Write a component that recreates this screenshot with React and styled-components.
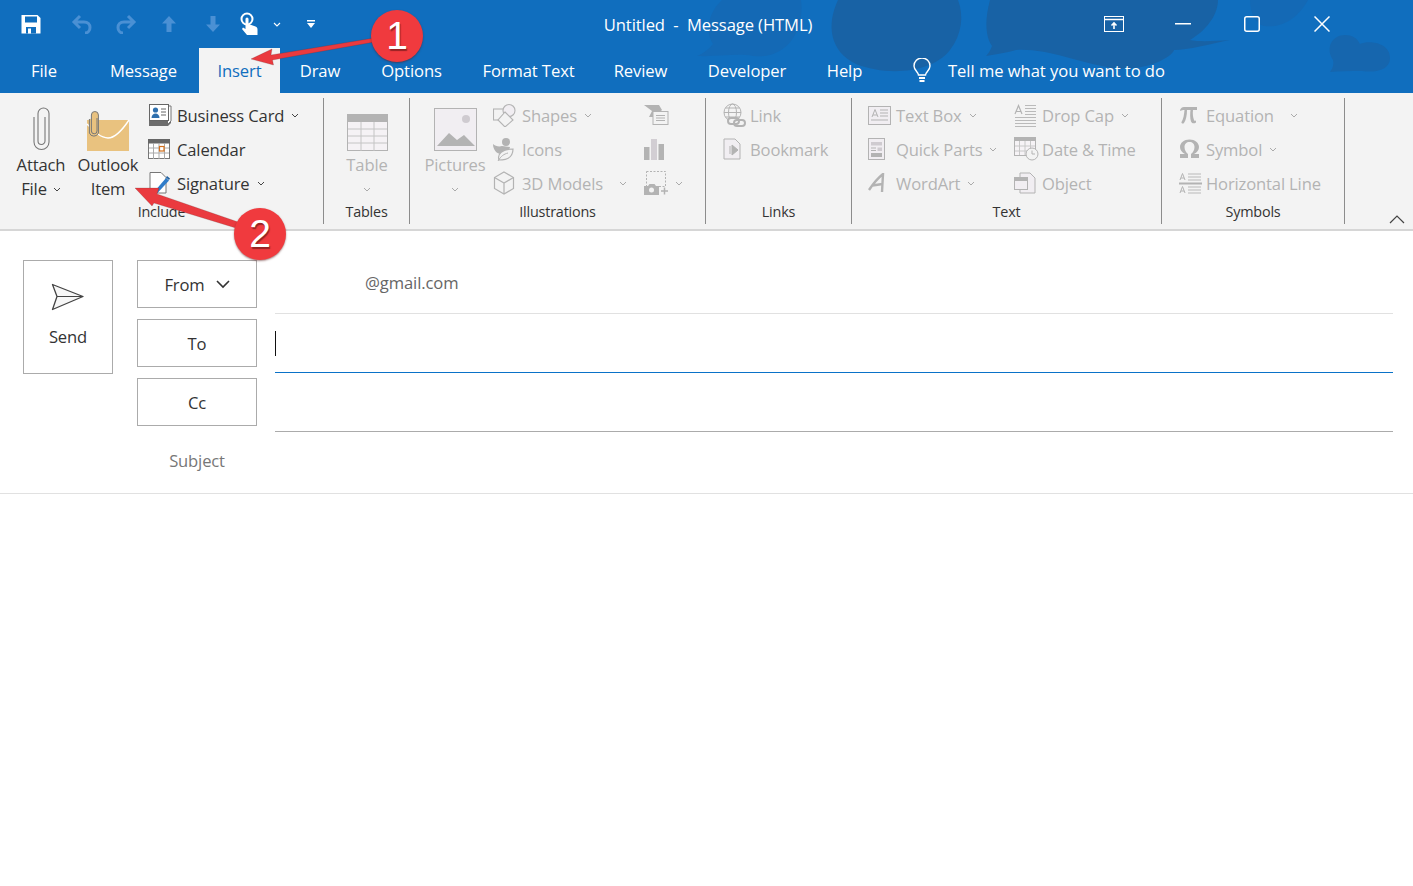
import styled, { createGlobalStyle } from 'styled-components'

const GlobalStyle = createGlobalStyle`
  html, body { margin: 0; padding: 0; background: #fff; }
  body { font-family: "Open Sans", "Liberation Sans", sans-serif; overflow: hidden; }
`

const Window = styled.div`
  position: relative;
  width: 1413px;
  height: 886px;
  background: #fff;
  overflow: hidden;
`

/* ---------- header ---------- */

const Header = styled.header`
  position: relative;
  height: 93px;
  background: #106ebe;
  color: #fff;
`

const Pattern = styled.svg`
  position: absolute;
  left: 0;
  top: 0;
`

const TitleBar = styled.div`
  position: relative;
  height: 48px;
  display: flex;
  align-items: center;
`

const QuickBar = styled.div`
  display: flex;
  align-items: center;
  width: 330px;
  height: 42px;
  flex: none;
`

const QuickSlot = styled.div`
  width: ${p => p.$w}px;
  display: flex;
  justify-content: center;
  flex: none;
`

const Title = styled.div`
  width: 756px;
  flex: none;
  text-align: center;
  font-size: 16.6px;
  letter-spacing: -0.1px;
  white-space: pre;
`

const WindowControls = styled.div`
  display: flex;
  align-items: center;
  height: 42px;
  margin-left: 50px;
`

const ControlSlot = styled.div`
  width: 69.3px;
  display: flex;
  justify-content: center;
`

const TabRow = styled.nav`
  position: relative;
  height: 45px;
  display: flex;
`

const Tab = styled.div`
  width: ${p => p.$w}px;
  flex: none;
  display: flex;
  align-items: center;
  justify-content: center;
  font-size: 16.6px;
  letter-spacing: -0.1px;
  padding-bottom: 1px;
  background: ${p => (p.$active ? '#f3f3f3' : 'transparent')};
  color: ${p => (p.$active ? '#106ebe' : '#fff')};
`

const TellMe = styled.div`
  display: flex;
  align-items: center;
  gap: 17px;
  margin-left: 31px;
  font-size: 16.6px;
  letter-spacing: -0.05px;
`

/* ---------- ribbon ---------- */

const Ribbon = styled.section`
  position: relative;
  height: 138px;
  box-sizing: border-box;
  background: #f3f3f3;
  border-bottom: 2px solid #d6d6d6;
  padding-top: 5px;
  display: flex;
  align-items: flex-start;
`

const Group = styled.div`
  width: ${p => p.$w}px;
  height: 126px;
  box-sizing: border-box;
  flex: none;
  border-right: 1px solid #8c8c8c;
  display: flex;
  flex-direction: column;
`

const GroupBody = styled.div`
  flex: 1;
  display: flex;
  padding-left: ${p => p.$pad || 0}px;
`

const GroupLabel = styled.div`
  height: 22px;
  line-height: 20px;
  text-align: center;
  font-size: 14.4px;
  letter-spacing: -0.2px;
  color: #333;
  padding-left: ${p => p.$shift || 0}px;
`

const LargeButton = styled.div`
  width: ${p => p.$w}px;
  flex: none;
  display: flex;
  flex-direction: column;
  align-items: center;
  font-size: 16.6px;
  letter-spacing: -0.15px;
  color: ${p => (p.$off ? '#b3b3b3' : '#333')};
`

const LargeIcon = styled.div`
  height: 53px;
  display: flex;
  align-items: flex-end;
  margin-bottom: 2px;
`

const LargeLine = styled.div`
  height: 24px;
  line-height: 24px;
  display: flex;
  align-items: center;
  gap: 6px;
  white-space: nowrap;
`

const Stack = styled.div`
  width: ${p => (p.$w ? `${p.$w}px` : 'auto')};
  flex: none;
  display: flex;
  flex-direction: column;
`

const SmallButton = styled.div`
  height: 34px;
  display: flex;
  align-items: center;
  font-size: 16.6px;
  letter-spacing: -0.15px;
  white-space: nowrap;
  color: ${p => (p.$off ? '#b3b3b3' : '#333')};
`

const SmallIcon = styled.div`
  width: ${p => p.$w || 28}px;
  height: 24px;
  flex: none;
  display: flex;
  align-items: center;
`

const Caret = styled.svg`
  flex: none;
  margin-left: ${p => p.$gap ?? 7}px;
`

const Collapse = styled.svg`
  position: absolute;
  right: 8px;
  bottom: 5px;
`

/* ---------- compose form ---------- */

const Compose = styled.main`
  display: grid;
  grid-template-columns: 90px 120px 1fr;
  column-gap: 0;
  padding: 29px 20px 0 23px;
`

const SendButton = styled.div`
  height: 114px;
  box-sizing: border-box;
  border: 1px solid #ababab;
  display: flex;
  flex-direction: column;
  align-items: center;
  font-size: 16.6px;
  letter-spacing: -0.15px;
  color: #333;
  padding-top: 22px;
  gap: 14px;
`

const Labels = styled.div`
  margin-left: 24px;
  width: 120px;
  display: flex;
  flex-direction: column;
  gap: 11px;
`

const FieldButton = styled.div`
  height: 48px;
  box-sizing: border-box;
  border: 1px solid #ababab;
  display: flex;
  align-items: center;
  justify-content: center;
  gap: 11px;
  font-size: 16.6px;
  letter-spacing: -0.15px;
  color: #333;
`

const SubjectLabel = styled.div`
  height: 48px;
  display: flex;
  align-items: center;
  justify-content: center;
  font-size: 16.6px;
  letter-spacing: -0.15px;
  color: #777;
  margin-top: -1px;
`

const Fields = styled.div`
  margin-left: 42px;
  display: flex;
  flex-direction: column;
`

const FieldLine = styled.div`
  height: 59px;
  box-sizing: border-box;
  display: flex;
  align-items: center;
  border-bottom: 1px solid ${p => p.$line};
  margin-top: ${p => p.$top || 0}px;
`

const Address = styled.span`
  margin-left: 90px;
  font-size: 16.6px;
  letter-spacing: -0.1px;
  color: #666;
  padding-bottom: 3px;
`

const TextCaret = styled.span`
  width: 1px;
  height: 25px;
  background: #111;
`

const SubjectRule = styled.div`
  position: absolute;
  left: 0;
  right: 0;
  top: 493px;
  height: 1px;
  background: #e1e1e1;
`

/* ---------- annotations ---------- */

const Notes = styled.svg`
  position: absolute;
  left: 0;
  top: 0;
  pointer-events: none;
`

const Badge = styled.div`
  position: absolute;
  left: ${p => p.$x - 26}px;
  top: ${p => p.$y - 26}px;
  width: 52px;
  height: 52px;
  border-radius: 50%;
  background: #f03a3e;
  box-shadow: 0 1px 2px rgba(90, 30, 30, 0.55);
  color: #fff;
  display: flex;
  align-items: center;
  justify-content: center;
  font-family: "Liberation Sans", sans-serif;
  font-size: 39px;
  text-shadow: 1px 2px 1px rgba(90, 20, 20, 0.6);
`

/* ---------- icons ---------- */

const OFF = '#b3b3b3'
const OFF_LIGHT = '#f1eef2'

const Chev = ({ gap, off }) => (
  <Caret $gap={gap} width="8" height="5" viewBox="0 0 8 5">
    <path d="M1 1l3 3 3-3" fill="none" stroke={off ? '#aaa' : '#444'} strokeWidth="1" />
  </Caret>
)

const SaveIcon = () => (
  <svg width="20" height="20" viewBox="0 0 20 20">
    <path d="M0.5 1h16l3 3v15.5H.5z" fill="#fff" />
    <rect x="4" y="2.5" width="12" height="6" fill="#106ebe" />
    <rect x="5" y="13" width="10" height="6.5" fill="#106ebe" />
    <rect x="7" y="14.5" width="3" height="5" fill="#fff" />
  </svg>
)

const UndoIcon = ({ flip }) => (
  <svg width="22" height="20" viewBox="0 0 22 20" style={flip ? { transform: 'scaleX(-1)' } : undefined}>
    <path d="M9 2L3 8l6 6M3 8h10c4 0 6 2.500 6 5.500S17 19 14 19" fill="none" stroke="#4a90d4" strokeWidth="3" />
  </svg>
)

const MoveIcon = ({ down }) => (
  <svg width="16" height="18" viewBox="0 0 16 18" style={down ? { transform: 'scaleY(-1)' } : undefined}>
    <path d="M8 1L1 8.500h4.500V17h5V8.500H15z" fill="#4a90d4" />
  </svg>
)

const TouchIcon = () => (
  <svg width="20" height="24" viewBox="0 0 20 24">
    <circle cx="7" cy="7" r="5.500" fill="none" stroke="#fff" strokeWidth="2" />
    <path d="M5.500 7a1.500 1.500 0 013 0v5l7 2.500c1.500.5 2 1.500 2 3V23H7l-5-6 1-1.500 2.500 1.500z" fill="#fff" />
  </svg>
)

const MiniChevron = () => (
  <svg width="8" height="5" viewBox="0 0 8 5">
    <path d="M1 1l3 3 3-3" fill="none" stroke="#fff" strokeWidth="1.100" />
  </svg>
)

const CustomizeIcon = () => (
  <svg width="8" height="8" viewBox="0 0 8 8">
    <rect width="8" height="1.500" fill="#fff" />
    <path d="M0 3h8L4 8z" fill="#fff" />
  </svg>
)

const RibbonDisplayIcon = () => (
  <svg width="20" height="16" viewBox="0 0 20 16" fill="none" stroke="#fff">
    <rect x=".5" y=".5" width="19" height="15" />
    <path d="M1 3.500h18" strokeWidth="1.500" />
    <path d="M10 13V7M7.500 9.500L10 7l2.500 2.500" strokeWidth="1.600" />
  </svg>
)

const MinimizeIcon = () => (
  <svg width="16" height="2" viewBox="0 0 16 2">
    <rect width="16" height="1.500" fill="#fff" />
  </svg>
)

const MaximizeIcon = () => (
  <svg width="16" height="16" viewBox="0 0 16 16">
    <rect x=".75" y=".75" width="14.500" height="14.500" rx="2" fill="none" stroke="#fff" strokeWidth="1.500" />
  </svg>
)

const CloseIcon = () => (
  <svg width="16" height="16" viewBox="0 0 16 16">
    <path d="M.5.5l15 15M15.500.5l-15 15" stroke="#fff" strokeWidth="1.500" />
  </svg>
)

const BulbIcon = () => (
  <svg width="18" height="25" viewBox="0 0 18 25" fill="none" stroke="#fff" strokeWidth="1.400">
    <path d="M5.500 17c0-3-4.500-4.500-4.500-9a8 8 0 0116 0c0 4.500-4.500 6-4.500 9z" />
    <path d="M6 20h6M6.500 23h5" strokeWidth="1.800" />
  </svg>
)

const PaperclipIcon = () => (
  <svg width="17" height="44" viewBox="0 0 17 44" fill="none" stroke="#777" strokeWidth="1.100">
    <path d="M12 10v24a3.500 3.500 0 01-7 0V6.500a5.500 5.500 0 0111 0V35a7.500 7.500 0 01-15 0V10" />
  </svg>
)

const OutlookItemIcon = () => (
  <svg width="44" height="40" viewBox="0 0 44 40">
    <rect x="1" y="9" width="42" height="31" fill="#e9c27f" />
    <path d="M1 13c6 6 13 14 21 14 8 0 15-9 21-18" fill="none" stroke="#fff" strokeWidth="1.400" />
    <path d="M11 7v13a2.800 2.800 0 01-5.600 0V4a3.500 3.500 0 017 0v18a4.800 4.800 0 01-9 0V8" fill="#e9c27f" stroke="#777" strokeWidth="1" />
  </svg>
)

const BusinessCardIcon = () => (
  <svg width="24" height="23" viewBox="0 0 24 23">
    <path d="M1 16h22v3l-3 3H1z" fill="#6d6d6d" />
    <path d="M20 2h3v15l-3 3" fill="#fff" stroke="#777" />
    <rect x="1.500" y=".5" width="19" height="16" fill="#fff" stroke="#666" />
    <circle cx="7.500" cy="6" r="2.600" fill="#2f70ae" />
    <path d="M3.500 14c0-3 2-4.500 4-4.500s4 1.500 4 4.500z" fill="#2f70ae" />
    <path d="M13 5h5M13 8h5M13 11h5" stroke="#666" />
  </svg>
)

const CalendarIcon = () => (
  <svg width="22" height="20" viewBox="0 0 22 20">
    <rect x=".5" y=".5" width="21" height="19" fill="#fff" stroke="#777" />
    <rect x="0" y="0" width="22" height="4.500" fill="#666" />
    <path d="M5.500 4v16M11 4v16M16.500 4v16M1 9h20M1 14h20" stroke="#aaa" />
    <rect x="11.500" y="7.500" width="4.500" height="4.500" fill="#fff" stroke="#d4701c" strokeWidth="1.200" />
  </svg>
)

const SignatureIcon = () => (
  <svg width="24" height="24" viewBox="0 0 24 24">
    <path d="M2 1.500h11l5 5V22H2z" fill="#fff" stroke="#777" />
    <path d="M6 21L18 7l3 2.500L9.500 22 5 23z" fill="#2f7cc9" />
    <path d="M19 5l3 2.500-1 1.500-3-2.500z" fill="#1f5f9f" />
  </svg>
)

const TableIcon = () => (
  <svg width="41" height="37" viewBox="0 0 41 37">
    <rect x=".5" y=".5" width="40" height="36" fill="#f5f2f5" stroke={OFF} />
    <rect x="0" y="0" width="41" height="8" fill={OFF} />
    <path d="M14 8v29M27 8v29M1 15h39M1 22h39M1 29h39" stroke="#c4c4c4" fill="none" />
  </svg>
)

const PictureIcon = () => (
  <svg width="43" height="43" viewBox="0 0 43 43">
    <rect x=".5" y=".5" width="42" height="42" fill={OFF_LIGHT} stroke={OFF} />
    <circle cx="32" cy="11" r="4" fill="#cfcbd0" />
    <path d="M3 38l12-13 8 7 7-5 11 11v0H3z" fill={OFF} />
  </svg>
)

const ShapesIcon = () => (
  <svg width="24" height="24" viewBox="0 0 24 24" fill="none" stroke={OFF} strokeWidth="1.100">
    <rect x=".5" y="6" width="12" height="11" />
    <circle cx="16" cy="7.500" r="6" fill={OFF_LIGHT} />
    <path d="M12 9l8 8-8 7-7-7z" fill="#f3f3f3" />
  </svg>
)

const DuckIcon = () => (
  <svg width="23" height="24" viewBox="0 0 23 24">
    <circle cx="13" cy="5" r="4" fill={OFF} />
    <path d="M0 7c2 2 6 3 9 2l8 1c-1 5-4 7-9 7-4 0-8-4-8-10z" fill={OFF} />
    <path d="M6 23c-2-6 3-11 14-11 0 7-4 11-14 11z" fill="#f3f3f3" stroke={OFF} strokeWidth="1.200" />
    <path d="M5 24c3-5 6-7 10-8" stroke={OFF} fill="none" />
  </svg>
)

const CubeIcon = () => (
  <svg width="22" height="24" viewBox="0 0 22 24" fill="none" stroke={OFF} strokeWidth="1.200">
    <path d="M11 1l9.500 5.500v11L11 23l-9.500-5.500v-11z" />
    <path d="M1.500 6.500L11 12l9.500-5.500M11 12v11" />
  </svg>
)

const SmartArtIcon = () => (
  <svg width="25" height="22" viewBox="0 0 25 22">
    <path d="M0 1h15l3 5-4 4 2 3H5l3-6z" fill={OFF} />
    <rect x="9" y="7.500" width="15" height="13" fill="#f3f3f3" stroke={OFF} />
    <path d="M12 11.500h9M12 14h9M12 16.500h9" stroke={OFF} />
  </svg>
)

const ChartIcon = () => (
  <svg width="20" height="21" viewBox="0 0 20 21">
    <rect x="0" y="8" width="5.500" height="13" fill={OFF} />
    <rect x="7" y="0" width="6" height="21" fill="#d2ced3" />
    <rect x="14.500" y="5" width="5.500" height="16" fill={OFF} />
  </svg>
)

const ScreenshotIcon = () => (
  <svg width="25" height="24" viewBox="0 0 25 24">
    <rect x="2.500" y=".5" width="19" height="15" fill="none" stroke={OFF} strokeDasharray="2 1.500" />
    <path d="M0 15h4l1.500-2h5L12 15h3v9H0z" fill={OFF} />
    <circle cx="7.500" cy="19" r="2.500" fill="#f3f3f3" />
    <path d="M17 20h7M20.500 16.500v7" stroke={OFF} strokeWidth="1.500" />
  </svg>
)

const LinkIcon = () => (
  <svg width="23" height="24" viewBox="0 0 23 24" fill="none" stroke={OFF}>
    <circle cx="9.500" cy="9.500" r="8.500" />
    <ellipse cx="9.500" cy="9.500" rx="4" ry="8.500" />
    <path d="M1 9.500h17M2.500 5h14M2.500 14h14" />
    <rect x="5" y="15" width="11" height="6" rx="3" strokeWidth="2" fill="#f3f3f3" />
    <rect x="11" y="17" width="11" height="6" rx="3" strokeWidth="2" />
  </svg>
)

const BookmarkIcon = () => (
  <svg width="19" height="22" viewBox="0 0 19 22" fill={OFF_LIGHT} stroke={OFF}>
    <path d="M1 1h11l5 5v15H1z" />
    <path d="M7 8v8M9 7l6 5-6 5z" fill={OFF} />
  </svg>
)

const TextBoxIcon = () => (
  <svg width="23" height="19" viewBox="0 0 23 19" fill="none" stroke={OFF}>
    <rect x=".5" y=".5" width="22" height="18" fill={OFF_LIGHT} />
    <path d="M4 11l3-7.500 3 7.500M5 9h4" />
    <path d="M12 4h8M12 7h8M12 10h8M3 14h17" />
  </svg>
)

const QuickPartsIcon = () => (
  <svg width="17" height="22" viewBox="0 0 17 22">
    <rect x=".5" y=".5" width="16" height="21" fill={OFF_LIGHT} stroke={OFF} />
    <rect x="3" y="4" width="11" height="3.500" fill="#cfcbd0" />
    <path d="M3 10h5M3 12.500h5" stroke={OFF} />
    <rect x="9.500" y="9.500" width="4.500" height="3.500" fill="#cfcbd0" />
    <rect x="3" y="15" width="11" height="4" fill={OFF} />
  </svg>
)

const WordArtIcon = () => (
  <svg width="17" height="20" viewBox="0 0 17 20">
    <path d="M1 17C5 11 10 5 15 1l-1 18M4.500 12.500L14.500 11" fill="none" stroke={OFF} strokeWidth="2.400" />
  </svg>
)

const DropCapIcon = () => (
  <svg width="23" height="23" viewBox="0 0 23 23" fill="none" stroke={OFF}>
    <path d="M1 10l3.500-8.500L8 10M2 7.500h5" strokeWidth="1.200" />
    <path d="M11 1.500h11M11 4.500h11M11 7.500h11M11 10.500h11M1 13.500h21M1 16.500h21M1 19.500h21M1 22.500h21" strokeWidth=".9" />
  </svg>
)

const DateTimeIcon = () => (
  <svg width="25" height="24" viewBox="0 0 25 24" fill="none">
    <rect x=".5" y=".5" width="21" height="18" stroke={OFF} fill="#f6f3f6" />
    <rect width="22" height="4" fill={OFF} />
    <path d="M5.500 4v14M11 4v14M16.500 4v14M1 9h20M1 14h20" stroke="#c8c8c8" />
    <circle cx="18" cy="17" r="6" fill="#f3f3f3" stroke={OFF} />
    <path d="M18 13.500V17h3" stroke={OFF} />
  </svg>
)

const ObjectIcon = () => (
  <svg width="22" height="22" viewBox="0 0 22 22" fill={OFF_LIGHT} stroke={OFF}>
    <path d="M6 5V1h10l5 5v15H6v-3" />
    <rect x=".5" y="5.500" width="13" height="12" />
    <rect x="1" y="6" width="12" height="3" fill={OFF} stroke="none" />
  </svg>
)

const PiIcon = () => (
  <svg width="19" height="20" viewBox="0 0 19 20">
    <path d="M1 5c1-2 2-3 4-3h13v3h-4c-.5 4 0 7 1 10 .3 1 1 1 2 .5v2c-2 1.500-4 1-5-1-1-3-1-8-.5-11.500H8c0 5-1 10-3 13-1 1-3 .5-2.500-1 2-3 2.500-7 3-12C3.500 5 2.500 5 1.500 6z" fill={OFF} />
  </svg>
)

const OmegaIcon = () => (
  <svg width="21" height="20" viewBox="0 0 21 20">
    <path d="M1 19v-4h5C3 13.500 1 11 1 8c0-4 4-7.500 9.500-7.500S20 4 20 8c0 3-2 5.500-5 7h5v4h-8v-4c2-1.500 3.500-4 3.500-7 0-3-2-5-5-5s-5 2-5 5c0 3 1.500 5.500 3.500 7v4z" fill={OFF} />
  </svg>
)

const HorizontalLineIcon = () => (
  <svg width="23" height="22" viewBox="0 0 23 22" fill="none" stroke={OFF}>
    <path d="M1 8l2.500-6.500L6 8M2 6h3M1 21l2.500-6.500L6 21M2 19h3" />
    <path d="M9 2h13M9 5h13M9 8h13M9 15h13M9 18h13M9 21h13" strokeWidth=".9" />
    <path d="M0 11.500h23" strokeWidth="2" />
  </svg>
)

const SendIcon = () => (
  <svg width="34" height="28" viewBox="0 0 34 28">
    <path d="M1.500 1.500L32 13.500 1.500 26.500 6 13.500z" fill="#f7f7f7" stroke="#444" strokeWidth="1.300" strokeLinejoin="round" />
    <path d="M6 13.500h26" stroke="#444" strokeWidth="1" />
  </svg>
)

const FromChevron = () => (
  <svg width="14" height="9" viewBox="0 0 14 9">
    <path d="M1 1l6 6 6-6" fill="none" stroke="#333" strokeWidth="1.600" />
  </svg>
)

const tabs = [
  ['File', 88],
  ['Message', 111],
  ['Insert', 81],
  ['Draw', 80],
  ['Options', 103],
  ['Format Text', 131],
  ['Review', 93],
  ['Developer', 120],
  ['Help', 75],
]

const Small = ({ icon, slot, label, off, caret, gap }) => (
  <SmallButton $off={off}>
    <SmallIcon $w={slot}>{icon}</SmallIcon>
    {label}
    {caret && <Chev off={off} gap={gap} />}
  </SmallButton>
)

const App = () => {
  return (
    <Window>
      <GlobalStyle />
      <Header>
        <Pattern width="1413" height="93" viewBox="0 0 1413 93">
          <path d="M722 0C706 15 706 34 713 44c-5 6-11 10-16 12 20 1 40-3 56 0 34 4 52-26 48-56z" fill="#1469b5" />
          <path d="M838 0c-12 25-8 52 18 64 30 12 75 10 94-14 12-16 14-34 8-50z" fill="#1862a5" />
          <path d="M990 0c-6 22-4 38 2 46-2 5-4 8-6 10 12-2 24-4 30-6 30-2 60 12 96 18 40 4 62-14 62-18 14 0 36-6 56-10-16 1-30 2-40 0 20-12 28-28 28-40z" fill="#1862a5" />
          <path d="M1250 0c0 14 6 24 14 26 14 2 32-4 44-26z" fill="#1469b5" />
          <path d="M1330 72c3-4 4-8 3-12-8-12-1-25 12-25 7 0 12 3 15 9 8-4 30-2 30 14 0 12-14 15-28 13-12 0-22 0-32 1z" fill="#1666ae" />
        </Pattern>
        <TitleBar>
          <QuickBar>
            <QuickSlot $w={62}><SaveIcon /></QuickSlot>
            <QuickSlot $w={44} style={{ marginLeft: -2 }}><UndoIcon /></QuickSlot>
            <QuickSlot $w={43}><UndoIcon flip /></QuickSlot>
            <QuickSlot $w={44}><MoveIcon /></QuickSlot>
            <QuickSlot $w={43}><MoveIcon down /></QuickSlot>
            <QuickSlot $w={32}><TouchIcon /></QuickSlot>
            <QuickSlot $w={21}><MiniChevron /></QuickSlot>
            <QuickSlot $w={47}><CustomizeIcon /></QuickSlot>
          </QuickBar>
          <Title style={{ marginLeft: -330 + 330 - 330 + 330, width: 756 }}>{'Untitled  -  Message (HTML)'}</Title>
          <WindowControls>
            <ControlSlot style={{ marginLeft: -57 }}><RibbonDisplayIcon /></ControlSlot>
            <ControlSlot><MinimizeIcon /></ControlSlot>
            <ControlSlot><MaximizeIcon /></ControlSlot>
            <ControlSlot><CloseIcon /></ControlSlot>
          </WindowControls>
        </TitleBar>
        <TabRow>
          {tabs.map(([name, w]) => (
            <Tab key={name} $w={w} $active={name === 'Insert'}>{name}</Tab>
          ))}
          <TellMe>
            <BulbIcon />
            Tell me what you want to do
          </TellMe>
        </TabRow>
      </Header>

      <Ribbon>
        <Group $w={324}>
          <GroupBody $pad={8}>
            <LargeButton $w={66}>
              <LargeIcon><PaperclipIcon /></LargeIcon>
              <LargeLine>Attach</LargeLine>
              <LargeLine>File<Chev gap={0} /></LargeLine>
            </LargeButton>
            <LargeButton $w={68}>
              <LargeIcon><OutlookItemIcon /></LargeIcon>
              <LargeLine>Outlook</LargeLine>
              <LargeLine>Item</LargeLine>
            </LargeButton>
            <Stack style={{ marginLeft: 6 }}>
              <Small icon={<BusinessCardIcon />} slot={29} label="Business Card" caret />
              <Small icon={<CalendarIcon />} slot={29} label="Calendar" />
              <Small icon={<SignatureIcon />} slot={29} label="Signature" caret />
            </Stack>
          </GroupBody>
          <GroupLabel $shift={0}>Include</GroupLabel>
        </Group>

        <Group $w={86}>
          <GroupBody>
            <LargeButton $w={86} $off>
              <LargeIcon><TableIcon /></LargeIcon>
              <LargeLine>Table</LargeLine>
              <LargeLine><Chev gap={0} off /></LargeLine>
            </LargeButton>
          </GroupBody>
          <GroupLabel>Tables</GroupLabel>
        </Group>

        <Group $w={296}>
          <GroupBody $pad={14}>
            <LargeButton $w={62} $off>
              <LargeIcon><PictureIcon /></LargeIcon>
              <LargeLine>Pictures</LargeLine>
              <LargeLine><Chev gap={0} off /></LargeLine>
            </LargeButton>
            <Stack $w={151} style={{ marginLeft: 7 }}>
              <Small off icon={<ShapesIcon />} slot={29} label="Shapes" caret />
              <Small off icon={<DuckIcon />} slot={29} label="Icons" />
              <Small off icon={<CubeIcon />} slot={29} label="3D Models" caret gap={16} />
            </Stack>
            <Stack>
              <Small off icon={<SmartArtIcon />} slot={32} />
              <Small off icon={<ChartIcon />} slot={32} />
              <SmallButton $off>
                <SmallIcon $w={31}><ScreenshotIcon /></SmallIcon>
                <Chev off gap={0} />
              </SmallButton>
            </Stack>
          </GroupBody>
          <GroupLabel $shift={0}>Illustrations</GroupLabel>
        </Group>

        <Group $w={146}>
          <GroupBody $pad={17}>
            <Stack>
              <Small off icon={<LinkIcon />} slot={27} label="Link" />
              <Small off icon={<BookmarkIcon />} slot={27} label="Bookmark" />
            </Stack>
          </GroupBody>
          <GroupLabel>Links</GroupLabel>
        </Group>

        <Group $w={310}>
          <GroupBody $pad={16}>
            <Stack $w={146}>
              <Small off icon={<TextBoxIcon />} label="Text Box" caret />
              <Small off icon={<QuickPartsIcon />} label="Quick Parts" caret />
              <Small off icon={<WordArtIcon />} label="WordArt" caret />
            </Stack>
            <Stack>
              <Small off icon={<DropCapIcon />} label="Drop Cap" caret />
              <Small off icon={<DateTimeIcon />} label="Date & Time" />
              <Small off icon={<ObjectIcon />} label="Object" />
            </Stack>
          </GroupBody>
          <GroupLabel>Text</GroupLabel>
        </Group>

        <Group $w={183}>
          <GroupBody $pad={17}>
            <Stack>
              <Small off icon={<PiIcon />} slot={27} label="Equation" caret gap={16} />
              <Small off icon={<OmegaIcon />} slot={27} label="Symbol" caret />
              <Small off icon={<HorizontalLineIcon />} slot={27} label="Horizontal Line" />
            </Stack>
          </GroupBody>
          <GroupLabel>Symbols</GroupLabel>
        </Group>

        <Collapse width="16" height="9" viewBox="0 0 16 9">
          <path d="M1 8l7-7 7 7" fill="none" stroke="#444" strokeWidth="1.200" />
        </Collapse>
      </Ribbon>

      <Compose>
        <SendButton>
          <SendIcon />
          Send
        </SendButton>
        <Labels>
          <FieldButton>From<FromChevron /></FieldButton>
          <FieldButton>To</FieldButton>
          <FieldButton>Cc</FieldButton>
          <SubjectLabel>Subject</SubjectLabel>
        </Labels>
        <Fields>
          <FieldLine $line="#e1e1e1" $top={-5}><Address>@gmail.com</Address></FieldLine>
          <FieldLine $line="#0a72c8"><TextCaret /></FieldLine>
          <FieldLine $line="#ababab" />
        </Fields>
      </Compose>
      <SubjectRule />

      <Notes width="1413" height="886" viewBox="0 0 1413 886">
        <g fill="#ea3a3f" stroke="rgba(90,40,40,0.35)" strokeWidth=".6">
          <path d="M251 59l21-10-1 6 103-17 .5 4-102 18 1 5z" />
          <path d="M135 188l24 0-2 6 84 29-2 6-85-26-2 3z" />
        </g>
      </Notes>
      <Badge $x={397} $y={36}>1</Badge>
      <Badge $x={260} $y={234}>2</Badge>
    </Window>
  )
}

export default App
